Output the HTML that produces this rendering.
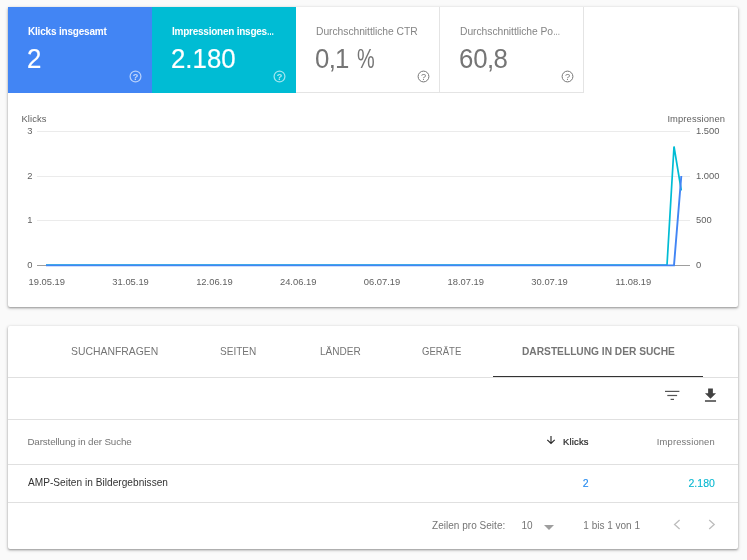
<!DOCTYPE html>
<html lang="de">
<head>
<meta charset="utf-8">
<title>Leistung</title>
<style>
html,body{margin:0;padding:0;}
body{width:747px;height:560px;background:#fafafa;overflow:hidden;position:relative;font-family:"Liberation Sans",sans-serif;color:#757575;}
.card{position:absolute;background:#fff;border-radius:2px;box-shadow:0 1px 2px rgba(0,0,0,.30),0 1px 3px 1px rgba(0,0,0,.12);}
.abs{position:absolute;white-space:nowrap;line-height:1;}
.tile{position:absolute;top:0;height:86px;width:144px;box-sizing:border-box;}
.tile .lbl{position:absolute;left:20px;top:19px;font-size:10.3px;line-height:12px;white-space:nowrap;}
.tile .val{position:absolute;left:19.2px;top:36.5px;font-size:27px;line-height:30px;white-space:nowrap;transform:scaleX(.956);transform-origin:0 50%;}
.tile svg{position:absolute;left:120.8px;top:63px;}
.t-w{border-right:1px solid #e4e4e4;border-bottom:1px solid #e4e4e4;}
.t-w .lbl{letter-spacing:-.04px;color:#858585;}
.t-w .val{color:#757575;}
.val .c{margin:0 -.75px;}
.val .pc{display:inline-block;transform:scaleX(.77);transform-origin:0 50%;}
.t-c .lbl{color:#fff;font-weight:bold;font-size:10px;letter-spacing:-.19px;}
.el{display:inline-block;transform:scaleX(.7);transform-origin:0 50%;}
.t-c .val{color:#fff;-webkit-text-stroke:.2px #fff;}
.tab{position:absolute;top:19px;font-size:11.2px;line-height:12px;color:#757575;white-space:nowrap;transform-origin:0 50%;}
.hl{position:absolute;left:0;right:0;height:1px;background:#e0e0e0;}
</style>
</head>
<body>
<div id="wrap" style="position:absolute;left:0;top:0;width:747px;height:560px;will-change:transform;">

<!-- Card 1: summary + chart -->
<div class="card" style="left:8px;top:7px;width:730px;height:300px;">
  <div class="tile t-c" style="left:0;background:#4285f4;">
    <div class="lbl">Klicks insgesamt</div>
    <div class="val">2</div>
    <svg width="13" height="13" viewBox="0 0 13 13"><circle cx="6.5" cy="6.5" r="5.4" fill="none" stroke="#fff" stroke-opacity=".62" stroke-width="1.25"/><text x="6.5" y="9.7" font-size="9.2" font-weight="bold" text-anchor="middle" fill="#fff" fill-opacity=".68" font-family="Liberation Sans, sans-serif">?</text></svg>
  </div>
  <div class="tile t-c" style="left:144px;background:#00bcd4;">
    <div class="lbl" style="letter-spacing:-.24px">Impressionen insges<span class="el">…</span></div>
    <div class="val">2.180</div>
    <svg width="13" height="13" viewBox="0 0 13 13"><circle cx="6.5" cy="6.5" r="5.4" fill="none" stroke="#fff" stroke-opacity=".62" stroke-width="1.25"/><text x="6.5" y="9.7" font-size="9.2" font-weight="bold" text-anchor="middle" fill="#fff" fill-opacity=".68" font-family="Liberation Sans, sans-serif">?</text></svg>
  </div>
  <div class="tile t-w" style="left:288px;">
    <div class="lbl">Durchschnittliche CTR</div>
    <div class="val">0<span class="c">,</span>1 <span class="pc">%</span></div>
    <svg width="13" height="13" viewBox="0 0 13 13"><circle cx="6.5" cy="6.5" r="5.4" fill="none" stroke="#757575" stroke-width="1"/><text x="6.5" y="9.7" font-size="9.2" text-anchor="middle" fill="#757575" font-family="Liberation Sans, sans-serif">?</text></svg>
  </div>
  <div class="tile t-w" style="left:432px;">
    <div class="lbl">Durchschnittliche Po<span class="el">…</span></div>
    <div class="val">60<span class="c">,</span>8</div>
    <svg width="13" height="13" viewBox="0 0 13 13"><circle cx="6.5" cy="6.5" r="5.4" fill="none" stroke="#757575" stroke-width="1"/><text x="6.5" y="9.7" font-size="9.2" text-anchor="middle" fill="#757575" font-family="Liberation Sans, sans-serif">?</text></svg>
  </div>

  <!-- chart (coordinates are page coords minus card offset 8,7) -->
  <svg class="abs" style="left:0;top:86px;" width="730" height="213" viewBox="8 93 730 213" font-family="Liberation Sans, sans-serif" font-size="9.4" fill="#616161">
    <text x="21.5" y="121.6" letter-spacing=".1">Klicks</text>
    <text x="725.1" y="121.6" text-anchor="end" letter-spacing=".12">Impressionen</text>
    <g stroke="#ebebeb" stroke-width="1">
      <line x1="37" x2="690" y1="131.5" y2="131.5"/>
      <line x1="37" x2="690" y1="176.5" y2="176.5"/>
      <line x1="37" x2="690" y1="220.5" y2="220.5"/>
    </g>
    <line x1="37" x2="690" y1="265.5" y2="265.5" stroke="#9e9e9e" stroke-width="1"/>
    <g text-anchor="end">
      <text x="32.5" y="134.3">3</text>
      <text x="32.5" y="179.3">2</text>
      <text x="32.5" y="223.3">1</text>
      <text x="32.5" y="268.3">0</text>
    </g>
    <g>
      <text x="696" y="134.3">1.500</text>
      <text x="696" y="179.3">1.000</text>
      <text x="696" y="223.3">500</text>
      <text x="696" y="268.3">0</text>
    </g>
    <g text-anchor="middle">
      <text x="46.8" y="285">19.05.19</text>
      <text x="130.6" y="285">31.05.19</text>
      <text x="214.4" y="285">12.06.19</text>
      <text x="298.2" y="285">24.06.19</text>
      <text x="382" y="285">06.07.19</text>
      <text x="465.8" y="285">18.07.19</text>
      <text x="549.6" y="285">30.07.19</text>
      <text x="633.4" y="285">11.08.19</text>
    </g>
    <polyline points="46,265.05 667,265.05 674,146.5 681.3,190.5" fill="none" stroke="#00bcd4" stroke-width="1.7" stroke-linejoin="miter"/>
    <polyline points="46,265.35 674,265.35 681.3,176" fill="none" stroke="#4285f4" stroke-width="1.9" stroke-linejoin="miter"/>
  </svg>
</div>

<!-- Card 2: table -->
<div class="card" style="left:8px;top:326px;width:730px;height:223px;">
  <div class="tab" style="left:63.4px;transform:scaleX(.93);">SUCHANFRAGEN</div>
  <div class="tab" style="left:211.9px;transform:scaleX(.898);">SEITEN</div>
  <div class="tab" style="left:311.6px;transform:scaleX(.899);">LÄNDER</div>
  <div class="tab" style="left:414.3px;transform:scaleX(.854);">GERÄTE</div>
  <div class="tab" style="left:513.8px;font-weight:bold;color:#757575;transform:scaleX(.911);">DARSTELLUNG IN DER SUCHE</div>
  <div class="hl" style="top:51px;"></div>
  <div class="abs" style="left:485px;top:50px;width:210px;height:1px;background:#333;"></div>

  <!-- toolbar icons -->
  <svg class="abs" style="left:655px;top:60px;" width="20" height="20" viewBox="0 0 20 20"><g fill="#555"><rect x="2" y="4.8" width="14.4" height="1.2"/><rect x="4.3" y="8.9" width="9.8" height="1.2"/><rect x="7.6" y="12.8" width="3.4" height="1.2"/></g></svg>
  <svg class="abs" style="left:693px;top:60px;" width="19" height="19" viewBox="0 0 24 24"><path fill="#424242" d="M19 9h-4V3H9v6H5l7 7 7-7zM5 18v2h14v-2H5z"/></svg>
  <div class="hl" style="top:93px;"></div>

  <!-- header -->
  <div class="abs" style="left:19.4px;top:110.7px;font-size:9.8px;letter-spacing:-.13px;color:#757575;">Darstellung in der Suche</div>
  <svg class="abs" style="left:537.9px;top:108.8px;" width="10" height="10" viewBox="0 0 10 10"><path d="M5 .9v7.6M1.3 4.8L5 8.5l3.7-3.7" fill="none" stroke="#2a2a2a" stroke-width="1.15"/></svg>
  <div class="abs" style="right:149.3px;top:111.1px;font-size:9.4px;letter-spacing:.2px;color:#2c2c2c;-webkit-text-stroke:.22px #2c2c2c;">Klicks</div>
  <div class="abs" style="right:23.2px;top:111.1px;font-size:9.4px;letter-spacing:.14px;color:#757575;">Impressionen</div>
  <div class="hl" style="top:138px;"></div>

  <!-- row -->
  <div class="abs" style="left:20px;top:151.7px;font-size:10.1px;letter-spacing:.03px;color:#333;">AMP-Seiten in Bildergebnissen</div>
  <div class="abs" style="right:149.3px;top:151.9px;font-size:10.5px;color:#2489ee;-webkit-text-stroke:.12px #2489ee;">2</div>
  <div class="abs" style="right:23.2px;top:151.9px;font-size:10.5px;color:#08b7d0;-webkit-text-stroke:.12px #08b7d0;">2.180</div>
  <div class="hl" style="top:176px;"></div>

  <!-- pagination -->
  <div class="abs" style="left:424px;top:194.5px;font-size:10px;letter-spacing:.03px;color:#757575;">Zeilen pro Seite:</div>
  <div class="abs" style="left:513.4px;top:194.5px;font-size:10px;color:#757575;">10</div>
  <svg class="abs" style="left:536px;top:199px;" width="10" height="5" viewBox="0 0 10 5"><path d="M0 0h10L5 5z" fill="#9e9e9e"/></svg>
  <div class="abs" style="left:575.3px;top:194.5px;font-size:10px;letter-spacing:0;color:#757575;">1 bis 1 von 1</div>
  <svg class="abs" style="left:664px;top:193px;" width="10" height="11" viewBox="0 0 10 11"><path d="M7.6 1L2.6 5.5l5 4.5" fill="none" stroke="#bdbdbd" stroke-width="1.3"/></svg>
  <svg class="abs" style="left:699.4px;top:193px;" width="10" height="11" viewBox="0 0 10 11"><path d="M2.2 1l5 4.5-5 4.5" fill="none" stroke="#bdbdbd" stroke-width="1.3"/></svg>
</div>

</div>
</body>
</html>
